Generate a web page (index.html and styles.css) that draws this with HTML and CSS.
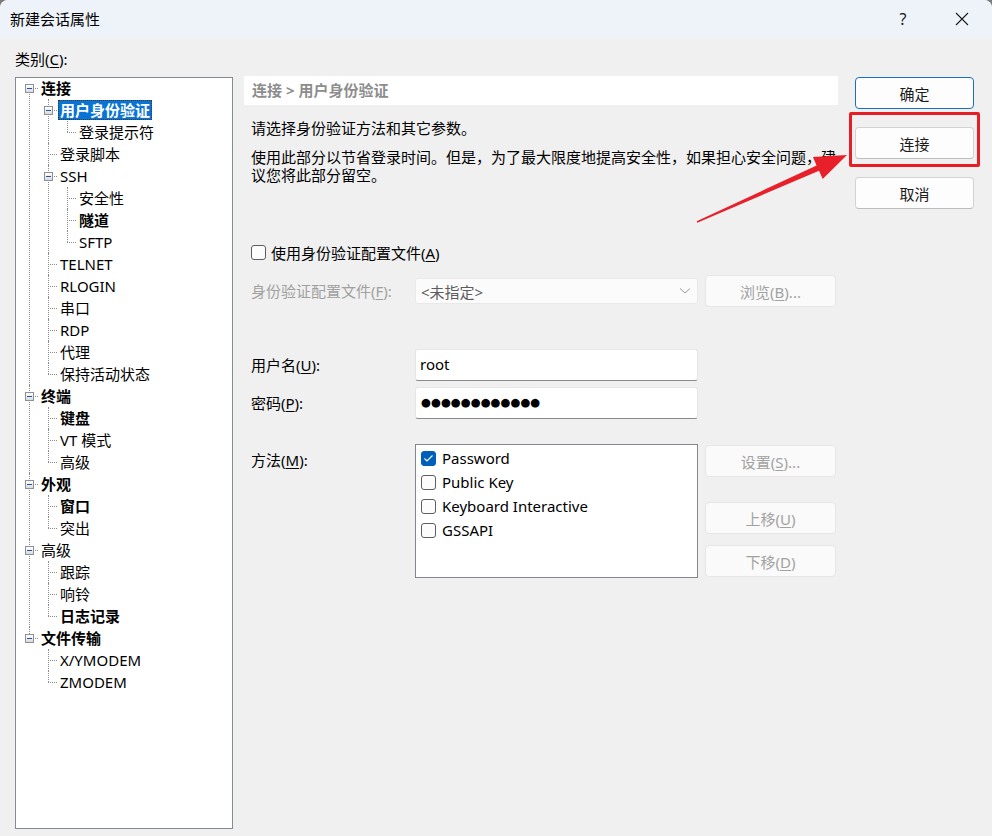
FILE: index.html
```html
<!DOCTYPE html>
<html lang="zh-CN">
<head>
    <meta charset="UTF-8">
    <meta name="viewport" content="width=device-width, initial-scale=1.0">
    <title>新建会话属性</title>
    <link rel="stylesheet" href="styles.css">
</head>
<body>
    <div class="window">
        <!-- Title bar -->
        <header class="titlebar">
            <span class="title">新建会话属性</span>
            <div class="title-actions">
                <span class="help">?</span>
                <span class="close">
                    <svg width="14" height="14" viewBox="0 0 14 14"><path d="M1 1 L13 13 M13 1 L1 13" stroke="#1b1b1b" stroke-width="1.1" fill="none"/></svg>
                </span>
            </div>
        </header>

        <main class="content">
            <!-- Category tree -->
            <section class="category">
                <div class="category-label">类别(<u>C</u>):</div>
                <div class="tree-box">
                    <ul class="tree">
                        <li>
                            <div class="row"><span class="toggle"></span><span class="label bold">连接</span></div>
                            <ul>
                                <li>
                                    <div class="row"><span class="toggle"></span><span class="label bold selected">用户身份验证</span></div>
                                    <ul>
                                        <li><div class="row"><span class="label">登录提示符</span></div></li>
                                    </ul>
                                </li>
                                <li><div class="row"><span class="label">登录脚本</span></div></li>
                                <li>
                                    <div class="row"><span class="toggle"></span><span class="label">SSH</span></div>
                                    <ul>
                                        <li><div class="row"><span class="label">安全性</span></div></li>
                                        <li><div class="row"><span class="label bold">隧道</span></div></li>
                                        <li><div class="row"><span class="label">SFTP</span></div></li>
                                    </ul>
                                </li>
                                <li><div class="row"><span class="label">TELNET</span></div></li>
                                <li><div class="row"><span class="label">RLOGIN</span></div></li>
                                <li><div class="row"><span class="label">串口</span></div></li>
                                <li><div class="row"><span class="label">RDP</span></div></li>
                                <li><div class="row"><span class="label">代理</span></div></li>
                                <li><div class="row"><span class="label">保持活动状态</span></div></li>
                            </ul>
                        </li>
                        <li>
                            <div class="row"><span class="toggle"></span><span class="label bold">终端</span></div>
                            <ul>
                                <li><div class="row"><span class="label bold">键盘</span></div></li>
                                <li><div class="row"><span class="label">VT 模式</span></div></li>
                                <li><div class="row"><span class="label">高级</span></div></li>
                            </ul>
                        </li>
                        <li>
                            <div class="row"><span class="toggle"></span><span class="label bold">外观</span></div>
                            <ul>
                                <li><div class="row"><span class="label bold">窗口</span></div></li>
                                <li><div class="row"><span class="label">突出</span></div></li>
                            </ul>
                        </li>
                        <li>
                            <div class="row"><span class="toggle"></span><span class="label">高级</span></div>
                            <ul>
                                <li><div class="row"><span class="label">跟踪</span></div></li>
                                <li><div class="row"><span class="label">响铃</span></div></li>
                                <li><div class="row"><span class="label bold">日志记录</span></div></li>
                            </ul>
                        </li>
                        <li>
                            <div class="row"><span class="toggle"></span><span class="label bold">文件传输</span></div>
                            <ul>
                                <li><div class="row"><span class="label">X/YMODEM</span></div></li>
                                <li><div class="row"><span class="label">ZMODEM</span></div></li>
                            </ul>
                        </li>
                    </ul>
                </div>
            </section>

            <!-- Settings panel -->
            <section class="panel">
                <div class="crumb">连接 &gt; 用户身份验证</div>
                <p class="intro">请选择身份验证方法和其它参数。</p>
                <p class="note">使用此部分以节省登录时间。但是，为了最大限度地提高安全性，如果担心安全问题，建议您将此部分留空。</p>

                <label class="check-row">
                    <span class="checkbox"></span>
                    <span>使用身份验证配置文件(<u>A</u>)</span>
                </label>

                <div class="form-row profile-row">
                    <span class="field-label disabled">身份验证配置文件(<u>F</u>):</span>
                    <div class="combo">
                        <span>&lt;未指定&gt;</span>
                        <svg width="12" height="8" viewBox="0 0 12 8"><path d="M1 1.5 L6 6 L11 1.5" stroke="#9a9a9a" stroke-width="1" fill="none"/></svg>
                    </div>
                    <button class="btn disabled">浏览(<u>B</u>)...</button>
                </div>

                <div class="form-row user-row">
                    <span class="field-label">用户名(<u>U</u>):</span>
                    <div class="field">root</div>
                </div>

                <div class="form-row pass-row">
                    <span class="field-label">密码(<u>P</u>):</span>
                    <div class="field dots">●●●●●●●●●●●●</div>
                </div>

                <div class="form-row method-row">
                    <span class="field-label top">方法(<u>M</u>):</span>
                    <ul class="listbox">
                        <li><span class="checkbox checked"><svg width="11" height="9" viewBox="0 0 11 9"><path d="M1.5 4.5 L4 7 L9.5 1.5" stroke="#fff" stroke-width="1.2" fill="none"/></svg></span>Password</li>
                        <li><span class="checkbox"></span>Public Key</li>
                        <li><span class="checkbox"></span>Keyboard Interactive</li>
                        <li><span class="checkbox"></span>GSSAPI</li>
                    </ul>
                    <div class="side-buttons">
                        <button class="btn disabled">设置(<u>S</u>)...</button>
                        <button class="btn disabled move-up">上移(<u>U</u>)</button>
                        <button class="btn disabled">下移(<u>D</u>)</button>
                    </div>
                </div>
            </section>

            <!-- Dialog buttons -->
            <aside class="actions">
                <button class="btn default">确定</button>
                <button class="btn">连接</button>
                <button class="btn">取消</button>
            </aside>
        </main>

        <!-- Annotation: red frame and arrow -->
        <div class="highlight"></div>
        <svg class="arrow" width="992" height="836" viewBox="0 0 992 836">
            <polygon points="696.7,221.3 816.6,165.4 812.9,157.1 847,155 822.7,179 819,170.8 697.3,222.7" fill="#e8202a"/>
        </svg>
    </div>
</body>
</html>
```

FILE: styles.css
```css
/* Page base */
html, body {
    margin: 0;
    padding: 0;
    background: #7a7a7a;
}

body {
    width: 992px;
    height: 836px;
    overflow: hidden;
    font-family: "Noto Sans", "Noto Sans CJK SC", sans-serif;
    font-size: 15px;
    color: #000;
}

u {
    text-underline-offset: 2px;
}

/* Dialog window */
.window {
    position: relative;
    width: 992px;
    height: 836px;
    background: #f0f0f0;
    border-radius: 8px 8px 0 0;
    overflow: hidden;
}

.titlebar {
    height: 38px;
    display: flex;
    align-items: center;
    justify-content: space-between;
    padding-left: 10px;
    background: #eef3f9;
}

.title {
    font-size: 15px;
    line-height: 20px;
}

.title-actions {
    display: flex;
    align-items: center;
    height: 100%;
}

.help,
.close {
    width: 58px;
    height: 100%;
    display: flex;
    align-items: center;
    justify-content: center;
}

.help {
    font-size: 16px;
    color: #1b1b1b;
}

.close {
    width: 60px;
}

/* Three column layout */
.content {
    display: flex;
    padding-left: 15px;
}

.category {
    width: 218px;
}

.category-label {
    margin-top: 11px;
    height: 20px;
    line-height: 20px;
}

.tree-box {
    margin-top: 8px;
    height: 752px;
    box-sizing: border-box;
    border: 1px solid #858a91;
    background: #fff;
}

/* Tree with dotted connector lines */
.tree,
.tree ul {
    list-style: none;
    margin: 0;
    padding: 0;
}

.tree {
    padding-left: 13px;
    margin-top: -1px;
}

.tree ul {
    padding-left: 19px;
}

.tree li {
    position: relative;
}

.tree li::before {
    content: "";
    position: absolute;
    left: 0;
    top: 0;
    bottom: 0;
    border-left: 1px dotted #8c8c8c;
}

.tree li:last-child::before {
    bottom: auto;
    height: 11px;
}

.tree > li:first-child::before {
    top: 11px;
}

.tree li::after {
    content: "";
    position: absolute;
    left: 0;
    top: 11px;
    width: 9px;
    border-top: 1px dotted #8c8c8c;
}

.row {
    position: relative;
    height: 22px;
    display: flex;
    align-items: center;
    padding-left: 10px;
}

.toggle {
    position: absolute;
    left: -4px;
    top: 7px;
    z-index: 1;
    width: 9px;
    height: 9px;
    box-sizing: border-box;
    border: 1px solid #8e9095;
    background: linear-gradient(#ffffff, #d9dadc);
}

.toggle::after {
    content: "";
    position: absolute;
    left: 1px;
    top: 3px;
    width: 5px;
    height: 1px;
    background: #2d4f9e;
}

.label {
    padding: 0 2px;
    height: 20px;
    line-height: 20px;
    white-space: nowrap;
}

.label.bold {
    font-weight: bold;
}

.label.selected {
    background: #0a74d6;
    color: #fff;
    outline: 1px dotted #3a3a3a;
    outline-offset: -1px;
}

/* Settings panel */
.panel {
    width: 594px;
    margin-left: 11px;
    padding-top: 38px;
}

.crumb {
    height: 29px;
    line-height: 29px;
    padding: 0 8px;
    background: #fff;
    color: #8d8d8d;
    font-weight: bold;
}

.intro,
.note {
    margin: 14px 0 0 7px;
    line-height: 18px;
}

.note {
    margin-top: 11px;
    width: 590px;
}

.check-row {
    margin: 58px 0 0 7px;
    height: 20px;
    display: flex;
    align-items: center;
    gap: 5px;
}

.checkbox {
    width: 15px;
    height: 15px;
    box-sizing: border-box;
    border: 1px solid #5e5e5e;
    border-radius: 3px;
    background: #fcfcfc;
    display: inline-flex;
    align-items: center;
    justify-content: center;
    flex-shrink: 0;
}

.checkbox.checked {
    background: #005fb8;
    border-color: #005fb8;
}

/* Label / field / button grid rows */
.form-row {
    display: grid;
    grid-template-columns: 157px 283px 131px;
    column-gap: 7px;
    padding-left: 7px;
    align-items: center;
}

.field-label {
    line-height: 20px;
    white-space: nowrap;
}

.field-label.disabled {
    color: #a0a0a0;
}

.field-label.top {
    align-self: start;
    margin-top: 6px;
}

.profile-row {
    margin-top: 13px;
}

.user-row {
    margin-top: 42px;
}

.pass-row {
    margin-top: 6px;
}

.method-row {
    margin-top: 25px;
    align-items: start;
}

.combo {
    height: 26px;
    box-sizing: border-box;
    display: flex;
    align-items: center;
    justify-content: space-between;
    padding: 0 6px 0 5px;
    background: #fbfbfb;
    border: 1px solid #e9e9e9;
    border-radius: 3px;
    color: #5c5c5c;
}

.field {
    height: 32px;
    box-sizing: border-box;
    padding: 0 4px 3px;
    display: flex;
    align-items: center;
    background: #fff;
    border: 1px solid #e6e6e6;
    border-bottom-color: #8a8a8a;
    border-radius: 3px;
}

.field.dots {
    font-family: "DejaVu Sans", sans-serif;
    font-size: 11.4px;
    padding-left: 5px;
}

.listbox {
    list-style: none;
    margin: 0;
    padding: 1px 0 0 5px;
    height: 134px;
    box-sizing: border-box;
    background: #fff;
    border: 1px solid #84878c;
}

.listbox li {
    height: 24px;
    display: flex;
    align-items: center;
    gap: 6px;
}

.side-buttons {
    display: flex;
    flex-direction: column;
    padding-top: 1px;
    gap: 11px;
}

.side-buttons .move-up {
    margin-top: 14px;
}

/* Buttons */
.btn {
    height: 32px;
    box-sizing: border-box;
    font-family: inherit;
    font-size: 15px;
    color: #1b1b1b;
    background: #fdfdfd;
    border: 1px solid #d2d2d2;
    border-bottom-color: #bdbdbd;
    border-radius: 4px;
    padding: 0;
}

.btn.disabled {
    color: #a2a2a2;
    background: #fafafa;
    border-color: #e6e6e6;
}

.btn.default {
    border: 1px solid #1a6fc4;
}

.actions {
    width: 119px;
    margin-left: 17px;
    padding-top: 39px;
    display: flex;
    flex-direction: column;
    gap: 18px;
}

/* Annotation overlays */
.highlight {
    position: absolute;
    left: 849px;
    top: 112px;
    width: 131px;
    height: 55px;
    box-sizing: border-box;
    border: 3px solid #e81e27;
    border-radius: 2px;
}

.arrow {
    position: absolute;
    left: 0;
    top: 0;
    pointer-events: none;
}
```
